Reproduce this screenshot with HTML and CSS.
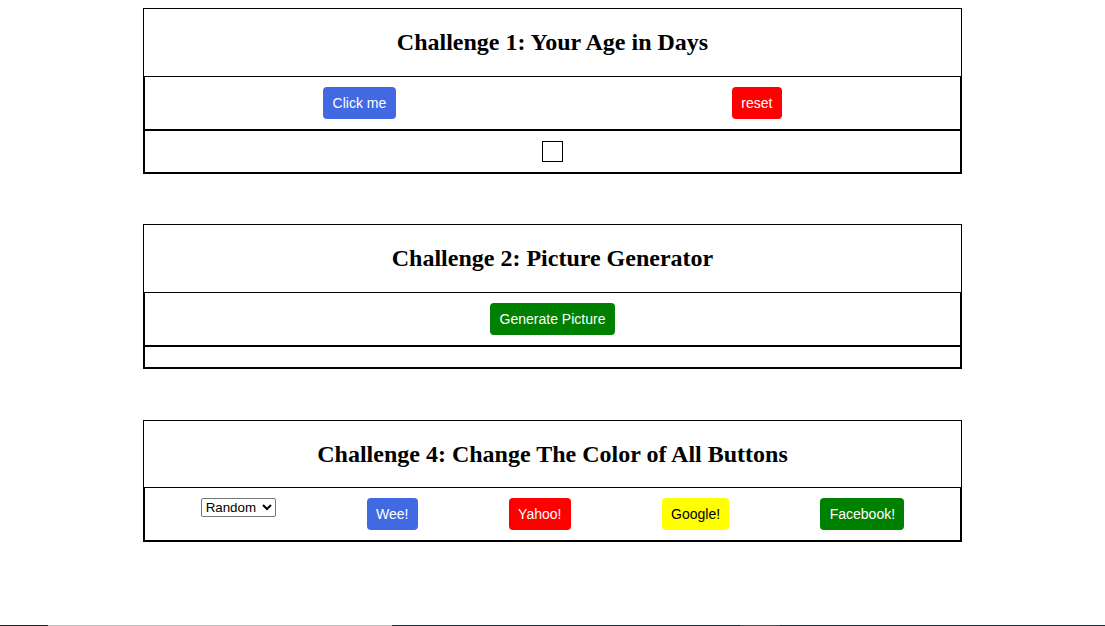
FILE: index.html
```html
<!DOCTYPE html>
<html lang="en">
<head>
<meta charset="utf-8">
<title>JavaScript Challenges</title>
<link rel="stylesheet" href="styles.css">
</head>
<body>
  <div class="container">
    <h2 class="title">Challenge 1: Your Age in Days</h2>
    <div class="flex-row">
      <button class="btn btn-blue">Click me</button>
      <button class="btn btn-red">reset</button>
    </div>
    <div class="flex-row flex-center">
      <div class="result-box"></div>
    </div>
  </div>

  <div class="container spaced">
    <h2 class="title">Challenge 2: Picture Generator</h2>
    <div class="flex-row">
      <button class="btn btn-green">Generate Picture</button>
    </div>
    <div class="flex-row"></div>
  </div>

  <div class="container spaced">
    <h2 class="title">Challenge 4: Change The Color of All Buttons</h2>
    <div class="flex-row">
      <div class="select-wrap">
        <select class="picker">
          <option>Random</option>
          <option>Red</option>
          <option>Green</option>
          <option>Reset</option>
        </select>
      </div>
      <button class="btn btn-blue">Wee!</button>
      <button class="btn btn-red">Yahoo!</button>
      <button class="btn btn-yellow">Google!</button>
      <button class="btn btn-green">Facebook!</button>
    </div>
  </div>

  <div class="bottom-edge">
    <span class="seg seg-a"></span>
    <span class="seg seg-b"></span>
    <span class="seg seg-c"></span>
    <span class="seg seg-d"></span>
    <span class="seg seg-e"></span>
  </div>
</body>
</html>
```

FILE: styles.css
```css
body {
  margin: 8px;
  background: #ffffff;
  color: #000000;
  font-family: "Liberation Serif", "Times New Roman", serif;
}

.container {
  width: 75%;
  margin: 0 auto;
  border: 1px solid #000000;
  text-align: center;
}

.container.spaced {
  margin-top: 50.5px;
}

.title {
  font-family: "Liberation Serif", "Times New Roman", serif;
  font-size: 24px;
  font-weight: bold;
  margin: 19.92px 0;
  line-height: 27px;
}

.flex-row {
  display: flex;
  flex-wrap: wrap;
  justify-content: space-around;
  align-items: flex-start;
  border: 1px solid #000000;
  padding: 10px;
}

.flex-center {
  justify-content: center;
}

.btn {
  border: none;
  border-radius: 4px;
  padding: 8px 9.25px;
  font-family: "Liberation Sans", Arial, sans-serif;
  font-size: 14px;
  line-height: 16px;
  color: #ffffff;
  cursor: pointer;
}

.btn-blue { background: #4169e1; }
.btn-red { background: #ff0000; }
.btn-green { background: #008000; }
.btn-yellow { background: #ffff00; color: #000000; }

.result-box {
  width: 19px;
  height: 19px;
  border: 1px solid #000000;
}

.select-wrap {
  display: flex;
}

.picker {
  font-family: "Liberation Sans", Arial, sans-serif;
  font-size: 13.333px;
  height: 19px;
  width: 75px;
  border: 1px solid #767676;
  border-radius: 2px;
  background: #ffffff;
  color: #000000;
}

.bottom-edge {
  position: fixed;
  left: 0;
  right: 0;
  bottom: 0;
  height: 1px;
  display: flex;
}

.seg { display: block; height: 1px; }
.seg-a { width: 48px; background: #1f1f1f; }
.seg-b { width: 344px; background: #bdbdbd; }
.seg-c { width: 348px; background: #212a30; }
.seg-d { width: 40px; background: #4a4a4a; }
.seg-e { flex: 1; background: #212a30; }
```
